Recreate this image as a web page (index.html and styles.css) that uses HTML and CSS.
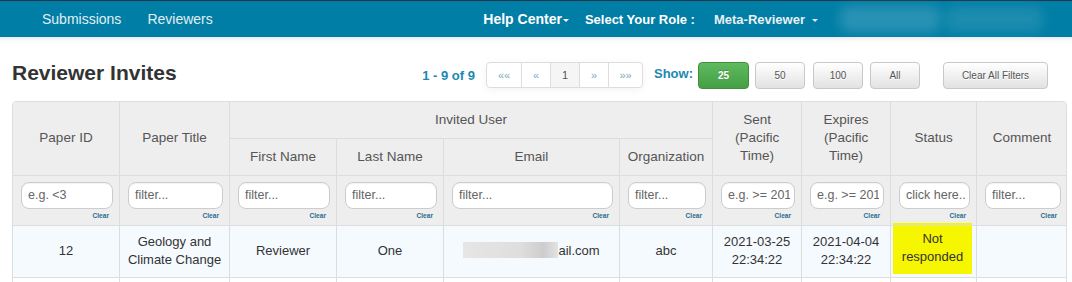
FILE: index.html
```html
<!DOCTYPE html>
<html lang="en">
<head>
<meta charset="utf-8">
<title>Reviewer Invites</title>
<link rel="stylesheet" href="styles.css">
</head>
<body>
<nav class="topnav">
  <div class="nav-left">
    <a class="nav-link">Submissions</a>
    <a class="nav-link">Reviewers</a>
  </div>
  <div class="nav-right">
    <a class="nav-strong help">Help Center<span class="caret"></span></a>
    <span class="nav-strong role-label">Select Your Role :</span>
    <a class="nav-strong role">Meta-Reviewer<span class="caret light"></span></a>
    <div class="user-blur"><span class="blob b1"></span><span class="blob b2"></span></div>
  </div>
</nav>
<main class="page">
  <div class="toolbar">
    <h1 class="title">Reviewer Invites</h1>
    <span class="count">1 - 9 of 9</span>
    <div class="pager">
      <span class="pg w34">&laquo;&laquo;</span>
      <span class="pg w29">&laquo;</span>
      <span class="pg w29 current">1</span>
      <span class="pg w29">&raquo;</span>
      <span class="pg w34">&raquo;&raquo;</span>
    </div>
    <span class="show">Show:</span>
    <button class="btn btn-green">25</button>
    <button class="btn g8">50</button>
    <button class="btn g7">100</button>
    <button class="btn g23">All</button>
    <button class="btn wide">Clear All Filters</button>
  </div>
  <div class="table-wrap">
    <table class="grid">
      <colgroup>
        <col class="c-id"><col class="c-title"><col class="c-first"><col class="c-last"><col class="c-email"><col class="c-org"><col class="c-sent"><col class="c-exp"><col class="c-status"><col class="c-comment">
      </colgroup>
      <thead>
        <tr>
          <th rowspan="2">Paper ID</th>
          <th rowspan="2">Paper Title</th>
          <th colspan="4">Invited User</th>
          <th rowspan="2">Sent<br>(Pacific<br>Time)</th>
          <th rowspan="2">Expires<br>(Pacific<br>Time)</th>
          <th rowspan="2">Status</th>
          <th rowspan="2">Comment</th>
        </tr>
        <tr>
          <th>First Name</th>
          <th>Last Name</th>
          <th>Email</th>
          <th>Organization</th>
        </tr>
        <tr class="filters">
          <td><input class="filter" placeholder="e.g. &lt;3"><div class="clear">Clear</div></td>
          <td><input class="filter" placeholder="filter..."><div class="clear">Clear</div></td>
          <td><input class="filter" placeholder="filter..."><div class="clear">Clear</div></td>
          <td><input class="filter" placeholder="filter..."><div class="clear">Clear</div></td>
          <td><input class="filter" placeholder="filter..."><div class="clear">Clear</div></td>
          <td><input class="filter" placeholder="filter..."><div class="clear">Clear</div></td>
          <td><input class="filter" placeholder="e.g. &gt;= 2012"><div class="clear">Clear</div></td>
          <td><input class="filter" placeholder="e.g. &gt;= 2012"><div class="clear">Clear</div></td>
          <td><input class="filter" placeholder="click here.."><div class="clear">Clear</div></td>
          <td><input class="filter" placeholder="filter..."><div class="clear">Clear</div></td>
        </tr>
      </thead>
      <tbody>
        <tr class="data">
          <td>12</td>
          <td>Geology and Climate Change</td>
          <td>Reviewer</td>
          <td>One</td>
          <td><span class="redacted"></span>ail.com</td>
          <td>abc</td>
          <td>2021-03-25<br>22:34:22</td>
          <td>2021-04-04<br>22:34:22</td>
          <td class="status"><div class="flag">Not<br>responded</div></td>
          <td></td>
        </tr>
        <tr class="next">
          <td></td><td></td><td></td><td></td><td></td><td></td><td></td><td></td><td></td><td></td>
        </tr>
      </tbody>
    </table>
  </div>
</main>
</body>
</html>
```
FILE: styles.css
```css
* { box-sizing: border-box; }
html, body { margin: 0; padding: 0; background: #fff; }
body { font-family: "Liberation Sans", Arial, sans-serif; color: #333; }

/* ---------- top navigation ---------- */
.topnav {
  height: 37px;
  border-top: 1px solid #22374a;
  background: #007ea6;
  display: flex;
  align-items: center;
}
.nav-left { display: flex; align-items: center; padding-left: 42px; gap: 26px; }
.nav-link { color: #e2eef3; font-size: 14px; }
.nav-right { margin-left: auto; display: flex; align-items: center; padding-right: 29px; }
.nav-strong { font-weight: bold; color: #fff; display: flex; align-items: center; }
.help { font-size: 14px; }
.role-label { font-size: 13px; margin-left: 16px; }
.role { font-size: 13px; margin-left: 19px; color: #e9f0f3; }
.caret {
  display: inline-block;
  width: 0; height: 0;
  border-left: 3px solid transparent;
  border-right: 3px solid transparent;
  border-top: 3px solid #fff;
  margin-left: 1px;
  margin-top: 2px;
}
.caret.light { margin-left: 7px; border-top-color: #dfe9ee; }
.user-blur {
  width: 203px; height: 26px; margin-left: 22px;
  display: flex; gap: 6px;
  filter: blur(6px);
}
.blob { display: block; height: 100%; border-radius: 8px; }
.b1 { width: 100px; background: rgba(255,255,255,0.16); }
.b2 { width: 97px; background: rgba(255,255,255,0.11); }

/* ---------- page ---------- */
.page {
  padding: 25px 5px 0 12px;
  background: linear-gradient(#ececec, #fff 5px) no-repeat;
}
.toolbar { display: flex; align-items: center; height: 27px; }
.title {
  margin: 0 auto 0 0;
  font-size: 21px;
  font-weight: bold;
  color: #333;
  line-height: 24px;
  align-self: flex-start;
  margin-top: -1px;
}
.count { font-size: 13px; font-weight: bold; color: #1a89b2; margin-right: 11px; }
.pager {
  display: flex;
  height: 26px;
  border: 1px solid #ddd;
  border-radius: 4px;
  background: #fff;
  box-shadow: 0 2px 9px rgba(0,0,0,0.05);
  margin-right: 11px;
  margin-top: -1px;
}
.pg {
  display: flex; align-items: center; justify-content: center;
  font-size: 11px; color: #7ea8bc;
  border-left: 1px solid #ddd;
}
.pg:first-child { border-left: 0; }
.pg.w34 { width: 34px; }
.pg.w29 { width: 29px; }
.pg.current { background: #f5f5f5; color: #555; font-size: 11px; }
.show { font-size: 13px; font-weight: bold; color: #1a89b2; margin-right: 5px; margin-top: -4px; }
.btn {
  font-family: "Liberation Sans", Arial, sans-serif;
  height: 27px;
  width: 50px;
  padding: 0;
  font-size: 10px;
  color: #555;
  border: 1px solid #c8c8c8;
  border-radius: 4px;
  background: linear-gradient(#fff, #e2e2e2);
  margin-left: 6px;
  text-shadow: 0 1px 0 #fff;
}
.btn-green {
  width: 51px;
  margin-left: 0;
  color: #fff;
  font-weight: bold;
  border-color: #3e8f3e;
  background: linear-gradient(#5fba5f, #45a045);
  text-shadow: 0 -1px 0 rgba(0,0,0,0.2);
}
.btn.g8 { margin-left: 6px; }
.btn.g7 { margin-left: 8px; }
.btn.g23 { margin-left: 7px; }
.btn.wide { width: 105px; margin-left: 23px; margin-right: 19px; }

/* ---------- table ---------- */
.table-wrap {
  margin-top: 12px;
  border: 1px solid #ddd;
  border-radius: 4px;
  overflow: hidden;
}
.grid {
  border-collapse: collapse;
  table-layout: fixed;
  width: calc(100% + 2px);
  margin: -1px;
}
.c-id { width: 107px; }
.c-title { width: 110px; }
.c-first { width: 107px; }
.c-last { width: 107px; }
.c-email { width: 176px; }
.c-org { width: 93px; }
.c-sent { width: 89px; }
.c-exp { width: 89px; }
.c-status { width: 86px; }
.c-comment { width: 91px; }
.grid th, .grid td {
  border: 1px solid #ddd;
  text-align: center;
  vertical-align: middle;
}
.grid th {
  background: #eee;
  color: #555;
  font-weight: normal;
  font-size: 13.5px;
  line-height: 18.3px;
  padding: 8.75px 4px;
}
.filters td {
  background: #eee;
  padding: 6px 6px 4px 8px;
}
.filter {
  display: block;
  width: 100%;
  height: 27px;
  border: 1px solid #ccc;
  border-radius: 8px;
  padding: 0 4px 0 6px;
  font-family: "Liberation Sans", Arial, sans-serif;
  font-size: 12.5px;
  color: #555;
  background: #fff;
  box-shadow: inset 0 1px 1px rgba(0,0,0,0.05);
}
.filter::placeholder { color: #666; }
.clear {
  text-align: right;
  font-size: 6.6px;
  font-weight: bold;
  color: #2b6d8e;
  line-height: 10px;
  margin-top: 2px;
  padding-right: 4px;
}
.data td {
  background: #f5faff;
  font-size: 13px;
  line-height: 18.5px;
  color: #333;
  padding: 7px 5px;
}
.redacted {
  display: inline-block;
  width: 95px;
  height: 16px;
  vertical-align: -3px;
  background: linear-gradient(90deg, #e6e6e6, #dedede 60%, #cdcdcd 85%, #e3e3e3);
  filter: blur(0.6px);
}
.data td.status { padding: 0; }
.flag {
  background: #f6f600;
  margin: -3px 4px 3px 2px;
  padding: 7px 2px;
  line-height: 18.5px;
}
.next td { background: #fff; height: 20px; }
```
